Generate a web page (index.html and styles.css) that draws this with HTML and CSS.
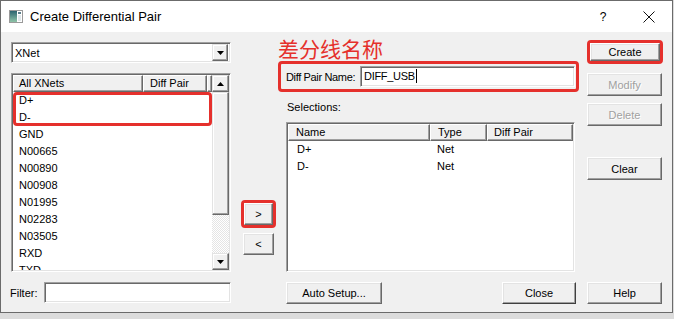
FILE: index.html
```html
<!DOCTYPE html>
<html lang="en">
<head>
    <meta charset="UTF-8">
    <title>Create Differential Pair</title>
    <link rel="stylesheet" href="styles.css">
</head>
<body>
    <div class="window">
        <div class="titlebar">
            <svg class="app-icon" width="14" height="13" viewBox="0 0 14 13">
                <defs>
                    <linearGradient id="pane" x1="0" y1="0" x2="0" y2="1">
                        <stop offset="0" stop-color="#2c6470"/>
                        <stop offset="1" stop-color="#8fc4a8"/>
                    </linearGradient>
                </defs>
                <rect x="0.5" y="0.5" width="13" height="12" fill="#fff" stroke="#9a9a9a"/>
                <rect x="1" y="1" width="7" height="11" fill="url(#pane)"/>
                <rect x="9" y="2" width="3" height="2" fill="#5d7f8c"/>
                <rect x="9" y="5" width="3" height="6" fill="#dfe7ea"/>
            </svg>
            <span class="title">Create Differential Pair</span>
            <span class="caption-btn help">?</span>
            <span class="caption-btn">
                <svg width="12" height="12" viewBox="0 0 12 12">
                    <path d="M0.5 0.5 L11.5 11.5 M11.5 0.5 L0.5 11.5" stroke="#111" stroke-width="1"/>
                </svg>
            </span>
        </div>

        <div class="dialog">
            <div class="col-left">
                <div class="combo">
                    <span class="combo-text">XNet</span>
                    <span class="combo-arrow">
                        <svg width="7" height="4" viewBox="0 0 7 4"><path d="M0 0 H7 L3.5 4 Z" fill="#000"/></svg>
                    </span>
                </div>

                <div class="listbox">
                    <div class="lb-main">
                        <div class="lb-header">
                            <span class="hcell h-xnets">All XNets</span>
                            <span class="hcell h-pair">Diff Pair</span>
                            <span class="hcell h-rest"></span>
                        </div>
                        <div class="lb-rows">
                            <div class="mark-rows">
                                <div class="row">D+</div>
                                <div class="row">D-</div>
                            </div>
                            <div class="row">GND</div>
                            <div class="row">N00665</div>
                            <div class="row">N00890</div>
                            <div class="row">N00908</div>
                            <div class="row">N01995</div>
                            <div class="row">N02283</div>
                            <div class="row">N03505</div>
                            <div class="row">RXD</div>
                            <div class="row">TXD</div>
                        </div>
                    </div>
                    <div class="vscroll">
                        <div class="sb-btn">
                            <svg width="7" height="4" viewBox="0 0 7 4"><path d="M0 4 H7 L3.5 0 Z" fill="#000"/></svg>
                        </div>
                        <div class="sb-thumb"></div>
                        <div class="sb-track"></div>
                        <div class="sb-btn">
                            <svg width="7" height="4" viewBox="0 0 7 4"><path d="M0 0 H7 L3.5 4 Z" fill="#000"/></svg>
                        </div>
                    </div>
                </div>

                <div class="filter-row">
                    <label class="filter-label">Filter:</label>
                    <div class="field filter-field"></div>
                </div>
            </div>

            <div class="col-mid">
                <div class="mark btn-mark-add">
                    <div class="btn btn-add">&gt;</div>
                </div>
                <div class="btn btn-remove">&lt;</div>
            </div>

            <div class="col-center">
                <div class="note">差分线名称</div>
                <div class="mark name-box">
                    <span class="name-label">Diff Pair Name:</span>
                    <div class="field name-field">DIFF_USB<span class="caret"></span></div>
                </div>
                <div class="sel-label">Selections:</div>
                <div class="listview">
                    <div class="lv-header">
                        <span class="hcell c-name">Name</span>
                        <span class="hcell c-type">Type</span>
                        <span class="hcell c-pair">Diff Pair</span>
                    </div>
                    <div class="lv-row">
                        <span class="c-name">D+</span>
                        <span class="c-type">Net</span>
                    </div>
                    <div class="lv-row">
                        <span class="c-name">D-</span>
                        <span class="c-type">Net</span>
                    </div>
                </div>
                <div class="bottom-row">
                    <div class="btn btn-auto">Auto Setup...</div>
                    <div class="btn btn-close">Close</div>
                </div>
            </div>

            <div class="col-right">
                <div class="mark btn-mark-create">
                    <div class="btn btn-create">Create</div>
                </div>
                <div class="btn side-btn btn-modify disabled">Modify</div>
                <div class="btn side-btn btn-delete disabled">Delete</div>
                <div class="btn side-btn btn-clear">Clear</div>
                <div class="btn side-btn btn-help">Help</div>
            </div>
        </div>
    </div>
</body>
</html>
```

FILE: styles.css
```css
body {
    margin: 0;
    background: #dcdcdc;
    font-family: "Liberation Sans", Arial, sans-serif;
    font-size: 11px;
    color: #000;
}
.window {
    width: 671px;
    height: 311px;
    border: 1px solid #6b6b6b;
    background: #f0f0f0;
    display: flex;
    flex-direction: column;
}

/* title bar */
.titlebar {
    height: 31px;
    background: #fff;
    display: flex;
    align-items: center;
    padding-left: 8px;
    flex-shrink: 0;
}
.app-icon {
    display: block;
}
.title {
    margin-left: 7px;
    font-size: 13px;
    color: #000;
}
.caption-btn {
    width: 46px;
    height: 31px;
    display: flex;
    align-items: center;
    justify-content: center;
}
.caption-btn.help {
    margin-left: auto;
    font-size: 12px;
    padding-top: 1px;
    box-sizing: border-box;
}

/* dialog body */
.dialog {
    flex: 1;
    display: flex;
    padding-left: 10px;
}

/* shared widgets */
.btn {
    box-sizing: border-box;
    display: flex;
    align-items: center;
    justify-content: center;
    background: #f0f0f0;
    border: 1px solid;
    border-color: #fff #696969 #696969 #fff;
    box-shadow: inset -1px -1px #a0a0a0, inset 1px 1px #e3e3e3;
    font-size: 11px;
}
.btn.disabled {
    color: #a0a0a0;
    text-shadow: 1px 1px #fff;
}
.field {
    box-sizing: border-box;
    background: #fff;
    border: 1px solid;
    border-color: #a0a0a0 #fff #fff #a0a0a0;
    box-shadow: inset 1px 1px #696969, inset -1px -1px #e3e3e3;
}
.mark {
    box-sizing: border-box;
    border: 3px solid #e5302c;
    border-radius: 4px;
}
.hcell {
    box-sizing: border-box;
    height: 17px;
    line-height: 15px;
    background: #f0f0f0;
    border: 1px solid;
    border-color: #fff #696969 #696969 #fff;
    box-shadow: inset -1px -1px #a0a0a0;
    white-space: nowrap;
}

/* left column */
.col-left {
    width: 220px;
    display: flex;
    flex-direction: column;
    padding-top: 10px;
}
.combo {
    box-sizing: border-box;
    height: 21px;
    background: #fff;
    border: 1px solid;
    border-color: #a0a0a0 #fff #fff #a0a0a0;
    box-shadow: inset 1px 1px #696969, inset -1px -1px #e3e3e3;
    display: flex;
    align-items: center;
    padding: 2px;
}
.combo-text {
    flex: 1;
    padding-left: 1px;
}
.combo-arrow {
    width: 16px;
    height: 17px;
    box-sizing: border-box;
    display: flex;
    align-items: center;
    justify-content: center;
    background: #f0f0f0;
    border: 1px solid;
    border-color: #e3e3e3 #696969 #696969 #e3e3e3;
    box-shadow: inset -1px -1px #a0a0a0, inset 1px 1px #fff;
}
.listbox {
    margin-top: 10px;
    height: 199px;
    box-sizing: border-box;
    background: #fff;
    border: 1px solid;
    border-color: #a0a0a0 #fff #fff #a0a0a0;
    box-shadow: inset 1px 1px #696969, inset -1px -1px #e3e3e3;
    padding: 1px;
    display: flex;
    overflow: hidden;
}
.lb-main {
    flex: 1;
    display: flex;
    flex-direction: column;
    overflow: hidden;
}
.lb-header {
    display: flex;
}
.h-xnets {
    width: 130px;
    padding-left: 5px;
}
.h-pair {
    width: 64px;
    padding-left: 6px;
}
.h-rest {
    flex: 1;
}
.lb-rows {
    flex: 1;
    overflow: hidden;
}
.mark-rows {
    outline: 3px solid #e5302c;
    outline-offset: -3px;
    border-radius: 4px;
}
.row {
    height: 17px;
    line-height: 17px;
    padding-left: 6px;
}
.vscroll {
    width: 17px;
    display: flex;
    flex-direction: column;
}
.sb-btn {
    box-sizing: border-box;
    height: 17px;
    display: flex;
    align-items: center;
    justify-content: center;
    background: #f0f0f0;
    border: 1px solid;
    border-color: #e3e3e3 #696969 #696969 #e3e3e3;
    box-shadow: inset -1px -1px #a0a0a0, inset 1px 1px #fff;
}
.sb-thumb {
    box-sizing: border-box;
    height: 123px;
    background: #f0f0f0;
    border: 1px solid;
    border-color: #e3e3e3 #696969 #696969 #e3e3e3;
    box-shadow: inset -1px -1px #a0a0a0, inset 1px 1px #fff;
}
.sb-track {
    flex: 1;
    background-color: #fff;
    background-image: repeating-conic-gradient(#e4e4e4 0 25%, #fff 0 50%);
    background-size: 2px 2px;
}
.filter-row {
    margin-top: 10px;
    display: flex;
    align-items: center;
}
.filter-label {
    flex: 1;
    margin-left: -1px;
}
.filter-field {
    width: 187px;
    height: 21px;
}

/* middle arrows */
.col-mid {
    width: 35px;
    margin-left: 10px;
    display: flex;
    flex-direction: column;
    padding-top: 168px;
}
.btn-mark-add {
    width: 35px;
    height: 28px;
}
.btn-add {
    width: 29px;
    height: 22px;
}
.btn-remove {
    margin-top: 5px;
    margin-left: 2px;
    width: 31px;
    height: 22px;
}

/* center column */
.col-center {
    width: 301px;
    margin-left: 2px;
    display: flex;
    flex-direction: column;
}
.note {
    margin-top: 4px;
    height: 24px;
    line-height: 24px;
    font-family: "Noto Sans CJK SC", sans-serif;
    font-size: 21px;
    color: #e5302c;
}
.name-box {
    margin-top: 1px;
    height: 31px;
    display: flex;
    align-items: center;
    padding: 0 1px 0 5px;
}
.name-label {
    flex: 1;
    white-space: nowrap;
    letter-spacing: -0.35px;
}
.name-field {
    flex-shrink: 0;
    width: 215px;
    height: 21px;
    line-height: 19px;
    padding-left: 3px;
    font-size: 11px;
    letter-spacing: -0.3px;
}
.caret {
    display: inline-block;
    width: 1px;
    height: 14px;
    margin-left: 1px;
    background: #000;
    vertical-align: -3px;
}
.sel-label {
    margin-top: 9px;
    padding-left: 9px;
    line-height: 13px;
}
.listview {
    margin-top: 8px;
    margin-left: 8px;
    width: 289px;
    height: 150px;
    box-sizing: border-box;
    background: #fff;
    border: 1px solid;
    border-color: #a0a0a0 #fff #fff #a0a0a0;
    box-shadow: inset 1px 1px #696969, inset -1px -1px #e3e3e3;
    padding: 1px;
}
.lv-header {
    display: flex;
}
.lv-header .c-name {
    width: 142px;
    padding-left: 7px;
}
.lv-header .c-type {
    width: 57px;
    padding-left: 7px;
}
.lv-header .c-pair {
    width: 86px;
    padding-left: 6px;
}
.lv-row {
    display: flex;
    height: 17px;
    line-height: 17px;
}
.lv-row .c-name {
    width: 142px;
    padding-left: 9px;
    box-sizing: border-box;
}
.lv-row .c-type {
    padding-left: 7px;
}
.bottom-row {
    margin-top: 10px;
    display: flex;
}
.btn-auto {
    margin-left: 8px;
    width: 96px;
    height: 22px;
}
.btn-close {
    margin-left: auto;
    margin-right: 3px;
    width: 74px;
    height: 22px;
    border-color: #fff #404040 #404040 #fff;
}

/* right column */
.col-right {
    width: 76px;
    margin-left: 8px;
    display: flex;
    flex-direction: column;
    padding-bottom: 8px;
}
.btn-mark-create {
    margin-top: 8px;
    width: 76px;
    height: 24px;
}
.btn-create {
    width: 70px;
    height: 18px;
}
.side-btn {
    width: 75px;
    height: 23px;
}
.btn-modify {
    margin-top: 9px;
}
.btn-delete {
    margin-top: 7px;
}
.btn-clear {
    margin-top: 31px;
}
.btn-help {
    margin-top: auto;
    height: 22px;
}
```
